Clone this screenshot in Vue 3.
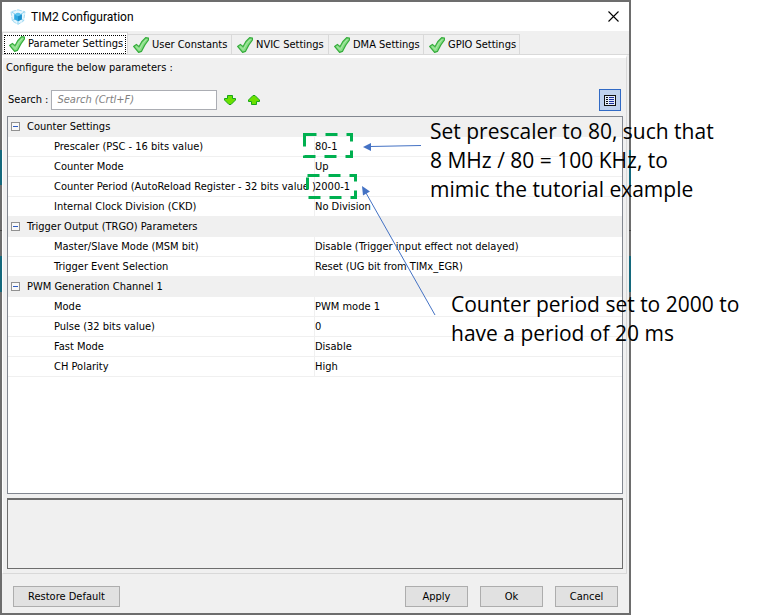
<script setup>
import { ref } from 'vue'

const tabs = ['Parameter Settings', 'User Constants', 'NVIC Settings', 'DMA Settings', 'GPIO Settings']
const active = ref(0)
const search = ref('')
const groups = [
  {
    name: 'Counter Settings',
    rows: [
      ['Prescaler (PSC - 16 bits value)', '80-1'],
      ['Counter Mode', 'Up'],
      ['Counter Period (AutoReload Register - 32 bits value )', '2000-1'],
      ['Internal Clock Division (CKD)', 'No Division'],
    ],
  },
  {
    name: 'Trigger Output (TRGO) Parameters',
    rows: [
      ['Master/Slave Mode (MSM bit)', 'Disable (Trigger input effect not delayed)'],
      ['Trigger Event Selection', 'Reset (UG bit from TIMx_EGR)'],
    ],
  },
  {
    name: 'PWM Generation Channel 1',
    rows: [
      ['Mode', 'PWM mode 1'],
      ['Pulse (32 bits value)', '0'],
      ['Fast Mode', 'Disable'],
      ['CH Polarity', 'High'],
    ],
  },
]
</script>

<template>
  <main class="stage">
    <section class="dialog" aria-labelledby="dialog-title">
      <header class="titlebar">
        <svg class="logo" viewBox="0 0 16 16" aria-hidden="true">
          <path d="M8 .8 L15 2.8 L13.6 12 L8 15.4 L2.4 12 L1 2.8 Z" fill="#e6f6fd" stroke="#a5dcf4" stroke-width="1" stroke-dasharray="4 1" />
          <path d="M1.500 3 L5 5 M14.500 3 L11 5 M8 12 V15 M2.500 11.500 L5 10 M13.500 11.500 L11 10" stroke="#8fd3f2" />
          <path d="M8 3.800 L11.800 5.400 V10.200 L8 12.200 L4.200 10.200 V5.400 Z" fill="#2fa9e2" />
          <path d="M8 7.200 L11.800 5.400 V10.200 L8 12.200 Z" fill="#1b8fcb" />
          <path d="M4.200 5.400 L8 7.200 L11.800 5.400 L8 3.800 Z" fill="#5cc3ef" />
        </svg>
        <h1 id="dialog-title">TIM2 Configuration</h1>
        <button class="close" type="button" aria-label="Close">
          <svg viewBox="0 0 11 11" aria-hidden="true"><path d="M.5 .5 L10.5 10.5 M10.5 .5 L.5 10.5" stroke="#000" stroke-width="1.1" /></svg>
        </button>
      </header>

      <nav class="tabs" role="tablist">
        <button v-for="(tab, i) in tabs" :key="tab" type="button" role="tab" class="tab" :class="{ selected: active === i }" :aria-selected="active === i" @click="active = i">
          <svg class="check" viewBox="0 0 16 16" aria-hidden="true">
            <path d="M.6 9.400 L3.400 7.400 L6 9.600 Q8.200 4 12.600 .7 L15.500 1.200 V2.800 Q11.500 7.500 8.400 14.400 L5.600 15.400 Z" fill="#86dc84" stroke="#35ac3b" stroke-width="1.200" stroke-linejoin="round" />
            <path d="M2.800 9.400 L6.300 12.600 Q9.300 6.200 13.300 2.400" fill="none" stroke="#a9eba6" stroke-width="1" />
          </svg>
          <span>{{ tab }}</span>
        </button>
      </nav>

      <div class="pane">
        <p class="hint">Configure the below parameters :</p>
        <div class="toolbar">
          <label for="search">Search :</label>
          <input id="search" v-model="search" type="text" placeholder="Search (Crtl+F)" />
          <button class="arrow" type="button" aria-label="Next match">
            <svg viewBox="0 0 12 10" aria-hidden="true"><path d="M3.5 .5 H8.5 V3.5 H11.5 V5 L7 9.5 H5 L.5 5 V3.5 H3.5 Z" fill="#6be000" stroke="#18a818" /></svg>
          </button>
          <button class="arrow" type="button" aria-label="Previous match">
            <svg viewBox="0 0 12 10" aria-hidden="true"><path d="M3.5 9.5 H8.5 V6.5 H11.5 V5 L7 .5 H5 L.5 5 V6.5 H3.5 Z" fill="#6be000" stroke="#18a818" /></svg>
          </button>
          <button class="view" type="button" aria-label="Show categories">
            <svg viewBox="0 0 12 11" aria-hidden="true">
              <rect x=".5" y=".5" width="11" height="10" fill="#e4ecfa" stroke="#111" />
              <path d="M2 2.5 H4 M2 4.5 H4 M2 6.5 H4 M2 8.5 H4" stroke="#111" />
              <path d="M5 2.5 H10 M5 4.5 H10 M5 6.5 H10 M5 8.5 H10" stroke="#1c2f9c" />
            </svg>
          </button>
        </div>

        <div class="grid">
          <table>
            <colgroup><col class="names" /><col /></colgroup>
            <tbody v-for="group in groups" :key="group.name">
              <tr class="group">
                <th colspan="2" scope="rowgroup">
                  <svg class="fold" viewBox="0 0 9 9" aria-hidden="true"><rect x=".5" y=".5" width="8" height="8" fill="#f8f8f8" stroke="#919191" /><path d="M2 4.5 H7" stroke="#2f5cc0" /></svg>{{ group.name }}
                </th>
              </tr>
              <tr v-for="row in group.rows" :key="row[0]">
                <th scope="row">{{ row[0] }}</th>
                <td>{{ row[1] }}</td>
              </tr>
            </tbody>
          </table>
        </div>
        <div class="description"></div>
      </div>

      <footer class="actions">
        <button class="btn restore" type="button">Restore Default</button>
        <button class="btn" type="button">Apply</button>
        <button class="btn" type="button">Ok</button>
        <button class="btn" type="button">Cancel</button>
      </footer>
    </section>

    <svg class="marks" width="440" height="320" viewBox="0 0 440 320" aria-hidden="true">
      <g fill="none" stroke="#00b050" stroke-width="3" stroke-dasharray="12 9">
        <rect x="304.500" y="134.500" width="47" height="22" />
        <rect x="307.500" y="175.500" width="48" height="22" />
      </g>
      <g stroke="#4472c4" fill="#4472c4">
        <path d="M421 145.500 L370 146.500" />
        <path d="M363 147 L371 143 V151 Z" stroke="none" />
        <path d="M435 315 L366 193" />
        <path d="M362 186 L370 191.500 L363 195.500 Z" stroke="none" />
      </g>
    </svg>
    <p class="note first">Set prescaler to 80, such that<br />8 MHz / 80 = 100 KHz, to<br />mimic the tutorial example</p>
    <p class="note second">Counter period set to 2000 to<br />have a period of 20 ms</p>
  </main>
</template>

<style>
body {
  margin: 0;
  background: #fff;
}
</style>

<style scoped>
* {
  box-sizing: border-box;
}

.stage {
  position: relative;
  min-height: 100vh;
  display: flex;
  padding-right: 129px;
  font: 11px/20px "DejaVu Sans Condensed", "DejaVu Sans", sans-serif;
  color: #000;
}

button,
input {
  font: inherit;
  color: inherit;
  margin: 0;
}

p,
h1 {
  margin: 0;
}

svg {
  display: block;
  flex: none;
}

.dialog {
  flex: 1;
  min-width: 0;
  display: flex;
  flex-direction: column;
  border: 2px solid transparent;
  background:
    linear-gradient(#f0f0f0, #f0f0f0) padding-box,
    linear-gradient(#6d6d6d 150px, #14687c 150px 185px, #6d6d6d 185px 230px, #444 230px 231px, #6d6d6d 231px 256px, #14687c 256px 292px, #6d6d6d 292px) border-box;
}

.titlebar {
  height: 29px;
  display: flex;
  align-items: center;
  gap: 5px;
  padding: 0 10px 0 8px;
  background: #fff;
}

.logo {
  width: 16px;
  height: 16px;
}

.titlebar h1 {
  flex: 1;
  font: 12px/16px Roboto, "Open Sans", sans-serif;
}

.close,
.arrow {
  border: 0;
  background: none;
  padding: 0;
}

.close svg {
  width: 11px;
  height: 11px;
}

.tabs {
  display: grid;
  grid-template-columns: 126px 104px 97px 95px 96px;
  align-items: end;
  height: 24px;
  border-bottom: 1px solid #d9d9d9;
  flex: none;
}

.tab {
  display: flex;
  align-items: center;
  gap: 3px;
  height: 20px;
  padding: 1px 0 0 5px;
  border: 1px solid #d9d9d9;
  border-width: 1px 1px 0 0;
  background: #f0f0f0;
  white-space: nowrap;
}

.tab.selected {
  position: relative;
  height: 22px;
  padding: 0 0 0 6px;
  border-left-width: 1px;
  background: #fff;
}

.tab.selected::after {
  content: "";
  position: absolute;
  inset: 2px 1px 0 1px;
  border: 1px dotted #000;
}

.check {
  width: 16px;
  height: 16px;
}

.pane {
  flex: 1;
  display: flex;
  flex-direction: column;
  border-top: 3px solid #fff;
  border-right: 1px solid #d9d9d9;
  border-bottom: 1px solid #d9d9d9;
  border-left: 1px solid #fff;
  margin-right: 2px;
  padding: 0 3px 0 4px;
}

.hint {
  margin-left: -1px;
}

.toolbar {
  display: flex;
  align-items: center;
  gap: 3px;
  padding: 11px 2px 5px 1px;
}

.toolbar input {
  width: 166px;
  height: 20px;
  border: 1px solid #abadb3;
  background: #fff;
  padding: 0 5px;
}

.toolbar input::placeholder {
  color: #808080;
  font-style: italic;
  opacity: 1;
}

.arrow {
  padding: 0 5px 0 4px;
}

.arrow svg {
  width: 12px;
  height: 10px;
}

.view {
  display: grid;
  place-items: center;
  width: 22px;
  height: 22px;
  margin-left: auto;
  padding: 0;
  border: 1px solid #316ac5;
  background: #c1d2ee;
}

.view svg {
  width: 12px;
  height: 11px;
}

.grid {
  flex: 1;
  border: 1px solid #828790;
  background: #fff;
}

table {
  width: 100%;
  table-layout: fixed;
  border-collapse: separate;
  border-spacing: 0;
}

.names {
  width: 307px;
}

th,
td {
  height: 20px;
  padding: 0;
  border-bottom: 1px solid #f0f0f0;
  font-weight: normal;
  line-height: 18px;
  text-align: left;
  white-space: nowrap;
}

tr > th[scope="row"] {
  padding-left: 46px;
  border-right: 1px solid #f0f0f0;
}

.group th {
  padding-left: 3px;
  background: #f0f0f0;
}

.fold {
  display: inline-block;
  width: 9px;
  height: 9px;
  margin-right: 7px;
  vertical-align: -1px;
}

.description {
  height: 71px;
  margin: 4px 0;
  border: 1px solid #6d6d6d;
  border-top-width: 2px;
}

.actions {
  display: flex;
  gap: 12px;
  padding: 12px 11px 6px;
}

.btn {
  width: 63px;
  height: 21px;
  padding: 0;
  border: 1px solid #adadad;
  background: #e1e1e1;
  line-height: 18px;
}

.restore {
  width: 107px;
  margin-right: auto;
}

.marks {
  position: absolute;
  left: 0;
  top: 0;
}

.note {
  position: absolute;
  font: 21px/29px "Open Sans", "Noto Sans", sans-serif;
  white-space: nowrap;
}

.first {
  left: 430px;
  top: 117px;
}

.second {
  left: 451px;
  top: 290px;
}
</style>
